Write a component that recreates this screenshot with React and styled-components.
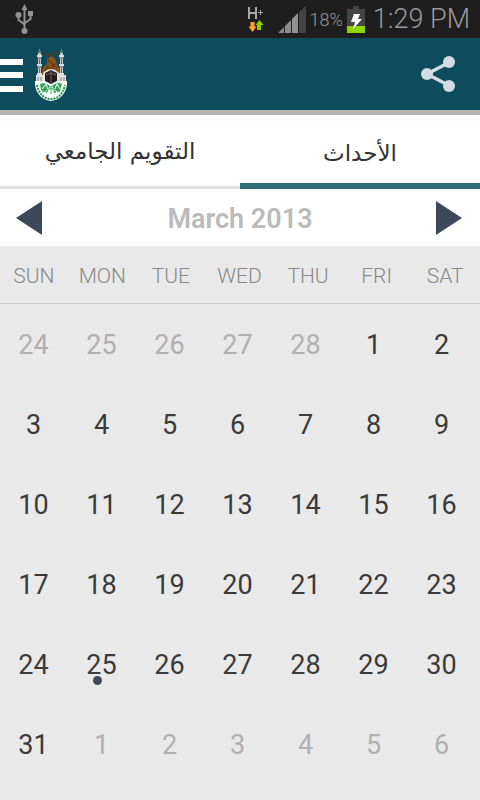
import React, { useState } from "react";
import styled, { createGlobalStyle } from "styled-components";

const GlobalStyle = createGlobalStyle`
  * { box-sizing: border-box; }
  body {
    margin: 0;
    background: #e9e9e9;
    font-family: Roboto, "Noto Sans", sans-serif;
    color: #333;
  }
  button { font: inherit; color: inherit; border: 0; padding: 0; background: none; cursor: pointer; }
`;

const Screen = styled.div`
  display: flex;
  flex-direction: column;
  min-height: 100vh;
`;

const StatusBar = styled.div`
  display: flex;
  align-items: center;
  height: 38px;
  padding: 0 10px 0 15px;
  background: #1e1e1e;
  color: #999;
`;

const StatusIcons = styled.div`
  display: flex;
  align-items: center;
  margin-left: auto;
`;

const Connection = styled.div`
  display: flex;
  align-items: center;
  gap: 13px;
`;

const Percent = styled.span`
  margin: 2px 4px 0;
  font-size: 18px;
  font-weight: 300;
  line-height: 24px;
`;

const Clock = styled.time`
  margin-left: 8px;
  font-size: 27px;
  font-weight: 300;
  line-height: 38px;
`;

const AppBar = styled.header`
  display: flex;
  align-items: center;
  height: 77px;
  padding-right: 24px;
  background: #0e4b5c;
  border-bottom: 5px solid #b3b3b3;
`;

const IconButton = styled.button`
  display: flex;
  align-items: center;
  svg { display: block; }
`;

const Logo = styled.svg`
  margin-left: 12px;
  margin-right: auto;
`;

const Tabs = styled.div`
  display: grid;
  grid-template-columns: 1fr 1fr;
  height: 74px;
  background: linear-gradient(#f8f8f8, #fff 8px);
`;

const Tab = styled.button`
  position: relative;
  padding-top: ${(p) => (p.$active ? 7 : 1)}px;
  border-bottom: ${(p) => (p.$active ? "6px solid #2e6e7c" : "3px solid #e1e1e1")};
  font-family: "DejaVu Sans", sans-serif;
  font-size: 23px;
  line-height: 24px;

  & + &::before {
    content: "";
    position: absolute;
    left: 0;
    top: 18px;
    height: 38px;
    border-left: 1px solid #e1e1e1;
  }
`;

const MonthBar = styled.div`
  display: flex;
  align-items: center;
  justify-content: space-between;
  height: 57px;
  padding: 0 18px 0 16px;
  background: #fff;
`;

const MonthTitle = styled.h1`
  margin: 0;
  padding: 2px 0 0 2px;
  font-family: Roboto, sans-serif;
  font-size: 27px;
  font-weight: 600;
  line-height: 32px;
  color: #bbb;
`;

const Calendar = styled.table`
  display: block;
  width: 100%;
  thead, tbody { display: block; }
`;

const WeekdayRow = styled.tr`
  display: grid;
  grid-template-columns: repeat(7, 1fr);
  height: 58px;
  align-items: center;
  border-bottom: 1px solid #c8c8c8;
`;

const Weekday = styled.th`
  padding: 2px 1px 0 0;
  font-size: 21px;
  font-weight: 300;
  line-height: 24px;
  color: #888;
`;

const WeekRow = styled.tr`
  display: grid;
  grid-template-columns: repeat(7, 1fr);
  height: 80px;
  padding-right: 4px;
`;

const DayCell = styled.td`
  display: grid;
  padding: 0;
`;

const DayButton = styled.button`
  position: relative;
  padding: 2px 1px 0 0;
  font-size: 27px;
  font-weight: 400;
  line-height: 32px;
  color: ${(p) => (p.$outside ? "#b0b0b0" : "#3a3a3a")};
`;

const EventDot = styled.span`
  position: absolute;
  top: 52px;
  left: 25px;
  width: 9px;
  height: 9px;
  border-radius: 50%;
  background: #3d4a5b;
`;

const UsbIcon = () => (
  <svg width="20" height="32" viewBox="0 0 20 32" fill="none" stroke="#929292" strokeWidth="2" aria-hidden="true">
    <path d="M9.500 6V28M3.500 12V17L9 21M15.500 10V16L10 20" />
    <path d="M6.500 7L9.500 1L12.500 7Z" fill="#929292" stroke="none" />
    <circle cx="3.500" cy="12" r="3" fill="#929292" stroke="none" />
    <path d="M13 8h5v5h-5z" fill="#929292" stroke="none" />
    <circle cx="9.500" cy="28" r="3" fill="#929292" stroke="none" />
  </svg>
);

const NetworkIcon = () => (
  <svg width="18" height="26" viewBox="0 0 18 26" aria-hidden="true">
    <path d="M2 1V13M9 1V13M2 7H9" stroke="#a8a8a8" strokeWidth="2" />
    <path d="M13.500 4V9M11 6.500H16" stroke="#a8a8a8" />
    <path d="M3.500 16H7.500V20.500H9.500L5.500 26L1.500 20.500H3.500Z" fill="#ffa033" />
    <path d="M10 24H14V19H16.500L12.500 14L8.500 19H10Z" fill="#8fce00" />
  </svg>
);

const SignalIcon = () => (
  <svg width="28" height="27" viewBox="0 0 28 27" aria-hidden="true">
    <path d="M0 27L6 21V27Z" fill="#858585" />
    <path d="M7 20L13 14V27H7Z" fill="#8c8c8c" />
    <path d="M14 13L20 7V27H14Z" fill="#929292" />
    <path d="M21 6L28 0V27H21Z" fill="#444" />
  </svg>
);

const BatteryIcon = () => (
  <svg width="18" height="27" viewBox="0 0 18 27" aria-hidden="true">
    <path d="M6 0H12V3H18V20H0V3H6Z" fill="#444" />
    <path d="M0 20H18V27H0Z" fill="#91d400" />
    <path d="M7 8H13L11 13H15L6 23L8 16H4Z" fill="#fff" />
  </svg>
);

const MenuIcon = () => (
  <svg width="23" height="36" viewBox="0 0 23 36" fill="#fff" aria-hidden="true">
    <path d="M0 3H23V9H0ZM0 16H23V22H0ZM0 30H23V36H0Z" />
  </svg>
);

const Minaret = ({ x }) => (
  <g transform={`translate(${x} 0)`}>
    <path d="M2.500 0L4 4V9H1V4Z" fill="#477f70" />
    <path d="M1 5H4V33H1Z" fill="#c5c8c3" />
    <path d="M0 8H5M0 17H5M0 26H5" stroke="#dededa" strokeWidth="2" />
    <path d="M0 10H5M0 19H5M2.500 11V16M2.500 20V25" stroke="#646f70" />
  </g>
);

const UniversityLogo = () => (
  <Logo width="32" height="58" viewBox="0 -3 32 58" role="img" aria-label="University emblem">
    <path d="M6 29L8 19L12 16L12 11L16 8L20 10L22 17L25 22L26 30Z" fill="#8b511d" />
    <path d="M9 25L13 18L16 22L20 15M13 12L17 16L22 20" stroke="#4f2d16" fill="none" />
    <path d="M9 4Q12 9 16 6Q20 8 22 3M12 8L20 5" stroke="#3e3d32" strokeWidth="2" fill="none" />
    <Minaret x={2} />
    <Minaret x={24} />
    <path d="M1 27H8V34H1ZM24 27H31V34H24Z" fill="#e3e3dd" />
    <path d="M3 29V34M6 29V34M26 29V34M29 29V34" stroke="#767d80" />
    <path d="M8 25Q16 17 24 25V35H8Z" fill="#e3e1dc" />
    <path d="M10 25L16 22L22 25V33L16 36L10 33Z" fill="#251d20" />
    <path d="M16 23V35M11 27L16 25L21 27" stroke="#77686a" fill="none" />
    <path d="M0 33H9L16 36L23 33H32C33 45 24 53 16 53S-1 45 0 33Z" fill="#f7faf7" />
    <path d="M5 36Q10 34 15 38L12 45L6 42ZM17 38Q22 33 27 36L25 43L19 45Z" fill="#32a05b" />
    <path d="M7 41L11 36L13 42M19 43L22 36L25 41M9 45L16 38L23 45" stroke="#fff" fill="none" />
    <path d="M2 37C4 47 10 51 16 51S28 47 30 37" stroke="#239653" strokeWidth="2" strokeDasharray="2 1" fill="none" />
    <path d="M7 44L16 40L25 44M16 38V46" stroke="#40a668" fill="none" />
  </Logo>
);

const ShareIcon = () => (
  <svg width="35" height="36" viewBox="0 0 35 36" fill="#d2dde1" aria-hidden="true">
    <path d="M28 6.500L6 18L28 29.500" fill="none" stroke="#d2dde1" strokeWidth="3.500" />
    <circle cx="6" cy="18" r="6" />
    <circle cx="28" cy="6" r="6" />
    <circle cx="28" cy="30" r="6" />
  </svg>
);

const ArrowIcon = ({ points }) => (
  <svg width="26" height="34" viewBox="0 0 26 34" aria-hidden="true">
    <polygon points={points} fill="#3d4859" />
  </svg>
);

const weekdays = ["SUN", "MON", "TUE", "WED", "THU", "FRI", "SAT"];
const tabs = ["التقويم الجامعي", "الأحداث"];

const weeks = Array.from({ length: 6 }, (_, week) =>
  Array.from({ length: 7 }, (_, day) => {
    const date = new Date(2013, 1, 24 + week * 7 + day);
    return { day: date.getDate(), month: date.getMonth() };
  })
);

export default function App() {
  const [activeTab, setActiveTab] = useState(1);

  return (
    <Screen>
      <GlobalStyle />
      <StatusBar>
        <UsbIcon />
        <StatusIcons>
          <Connection>
            <NetworkIcon />
            <SignalIcon />
          </Connection>
          <Percent>18%</Percent>
          <BatteryIcon />
          <Clock>1:29 PM</Clock>
        </StatusIcons>
      </StatusBar>
      <AppBar>
        <IconButton aria-label="Menu"><MenuIcon /></IconButton>
        <UniversityLogo />
        <IconButton aria-label="Share"><ShareIcon /></IconButton>
      </AppBar>
      <Tabs role="tablist">
        {tabs.map((label, i) => (
          <Tab key={label} role="tab" dir="rtl" lang="ar" aria-selected={activeTab === i} $active={activeTab === i} onClick={() => setActiveTab(i)}>
            {label}
          </Tab>
        ))}
      </Tabs>
      <MonthBar>
        <IconButton aria-label="Previous month"><ArrowIcon points="0,17 26,0 26,34" /></IconButton>
        <MonthTitle>March 2013</MonthTitle>
        <IconButton aria-label="Next month"><ArrowIcon points="26,17 0,0 0,34" /></IconButton>
      </MonthBar>
      <Calendar aria-label="March 2013">
        <thead>
          <WeekdayRow>
            {weekdays.map((name) => <Weekday key={name} scope="col">{name}</Weekday>)}
          </WeekdayRow>
        </thead>
        <tbody>
          {weeks.map((week, i) => (
            <WeekRow key={i}>
              {week.map(({ day, month }) => (
                <DayCell key={`${month}-${day}`}>
                  <DayButton $outside={month !== 2}>
                    {day}
                    {month === 2 && day === 25 && <EventDot />}
                  </DayButton>
                </DayCell>
              ))}
            </WeekRow>
          ))}
        </tbody>
      </Calendar>
    </Screen>
  );
}
